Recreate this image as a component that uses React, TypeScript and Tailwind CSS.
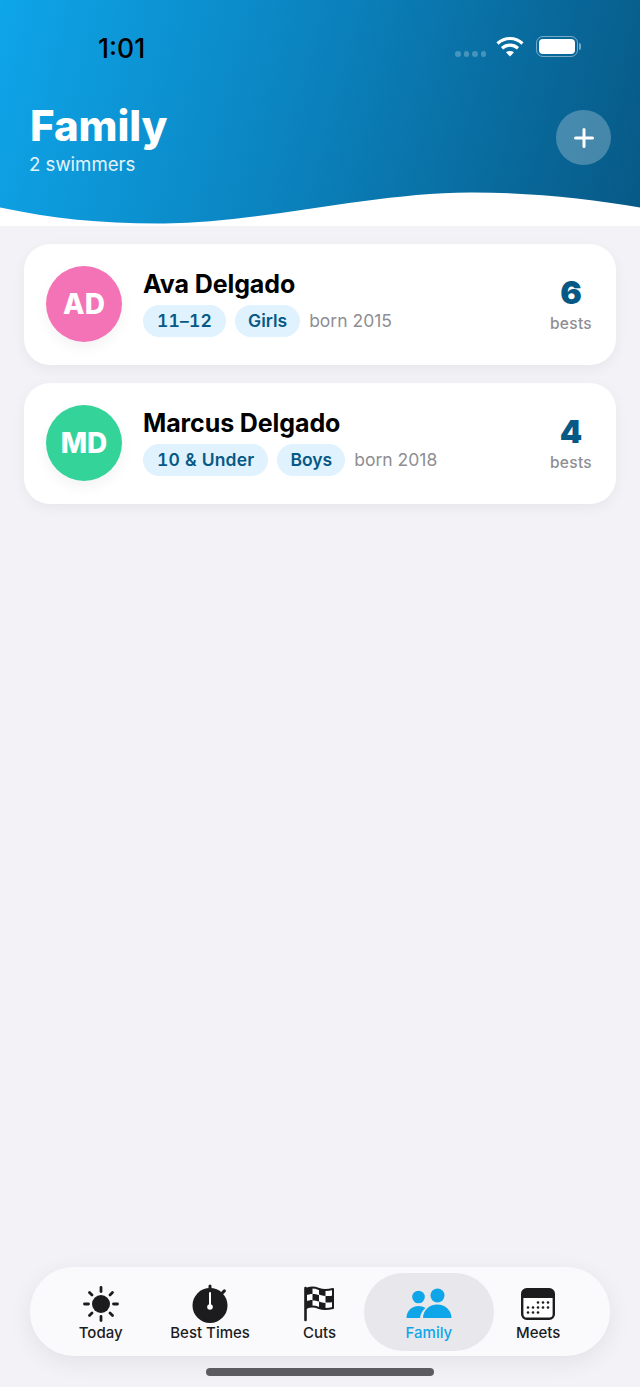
import React from "react";

const SunIcon = () => (
  <svg width="38" height="38" viewBox="0 0 38 38" fill="none">
    <circle cx="19" cy="19" r="9" fill="#1c1c1e" />
    <g stroke="#1c1c1e" strokeWidth="2.8" strokeLinecap="round">
      <path d="M19 2.500v4" />
      <path d="M19 31.500v4" />
      <path d="M2.500 19h4" />
      <path d="M31.500 19h4" />
      <path d="M7.500 7.500l2.500 2.500" />
      <path d="M28 28l2.500 2.500" />
      <path d="M7.500 30.500L10 28" />
      <path d="M28 10l2.500-2.500" />
    </g>
  </svg>
);

const StopwatchIcon = () => (
  <svg width="38" height="40" viewBox="0 0 38 40" fill="none">
    <circle cx="19" cy="21.500" r="17.500" fill="#1c1c1e" />
    <rect x="17.500" y="0.500" width="3" height="5" rx="1.500" fill="#1c1c1e" />
    <rect x="31" y="5" width="3" height="5.500" rx="1.500" transform="rotate(45 32.500 7.750)" fill="#1c1c1e" />
    <rect x="18" y="8" width="2" height="14" rx="1" fill="#fff" />
    <circle cx="19" cy="23" r="2.800" fill="#fff" />
  </svg>
);

const FlagIcon = () => (
  <svg width="32" height="36" viewBox="0 0 32 36" fill="none">
    <path d="M2.500 2v32" stroke="#1c1c1e" strokeWidth="2.600" strokeLinecap="round" />
    <path d="M3 3c5-2.500 9-1.500 13 0s8 1.500 14 0v19c-6 1.500-10 1.500-14 0s-8-2.500-13 0z" fill="#fff" stroke="#1c1c1e" strokeWidth="2" strokeLinejoin="round" />
    <g fill="#1c1c1e">
      <path d="M3 3c2-1 4-1.500 6.500-1.500V8C7 8 5 8.500 3 9.500z" />
      <path d="M16 2.500c2 .7 4 1.200 6.500 1.400V10c-2.500-.2-4.500-.7-6.500-1.400z" />
      <path d="M9.500 8c2.500 0 4.500.4 6.500 1.100v6.500c-2-.7-4-1.100-6.500-1.100z" />
      <path d="M22.500 10c2.500.2 4.500.1 7.500-.4v6.500c-3 .5-5 .6-7.500.4z" />
      <path d="M3 15.500c2-1 4-1.500 6.500-1.500v7c-2.500 0-4.500.5-6.500 1.500z" />
      <path d="M16 15.600c2 .7 4 1.200 6.500 1.400v6.500c-2.500-.2-4.500-.6-6.500-1.300z" />
    </g>
  </svg>
);

const PeopleIcon = () => (
  <svg width="46" height="32" viewBox="0 0 46 32" fill="#0ea5e9">
    <circle cx="12.500" cy="9" r="6.300" />
    <circle cx="31.500" cy="7.500" r="7" />
    <path d="M.5 30c0-7 5-12 12-12 2.800 0 5 .7 7 2-3 2.300-5 5.700-5.500 10z" />
    <path d="M17 30c0-7.500 6-13.500 14.200-13.500S45.500 22.500 45.500 30z" />
  </svg>
);

const CalendarIcon = () => (
  <svg width="34" height="32" viewBox="0 0 34 32" fill="none">
    <rect x="1.200" y="1.200" width="31.600" height="29.600" rx="4.500" fill="#fff" stroke="#1c1c1e" strokeWidth="2.400" />
    <path d="M1.200 6a4.500 4.500 0 0 1 4.500-4.500h22.600A4.500 4.500 0 0 1 32.800 6v4H1.200z" fill="#1c1c1e" />
    <g fill="#1c1c1e">
      {[14.5, 19.5, 24.5].map((y, row) =>
        [7, 12, 17, 22, 27].map((x, col) =>
          (row === 0 && col < 2) || (row === 2 && col > 2) ? null : (
            <circle key={`${x}-${y}`} cx={x} cy={y} r="1.300" />
          )
        )
      )}
    </g>
  </svg>
);

const tabs = [
  { label: "Today", icon: <SunIcon /> },
  { label: "Best Times", icon: <StopwatchIcon /> },
  { label: "Cuts", icon: <FlagIcon /> },
  { label: "Family", icon: <PeopleIcon />, active: true },
  { label: "Meets", icon: <CalendarIcon /> },
];

const swimmers = [
  { initials: "AD", name: "Ava Delgado", age: "11–12", group: "Girls", born: "born 2015", bests: 6, color: "bg-[#f472b6]", shadow: "shadow-[0_6px_14px_rgba(0,0,0,0.05)]" },
  { initials: "MD", name: "Marcus Delgado", age: "10 & Under", group: "Boys", born: "born 2018", bests: 4, color: "bg-[#34d399]", shadow: "shadow-[0_6px_14px_rgba(0,0,0,0.05)]" },
];

const App = () => {
  return (
    <div className="relative flex flex-col h-[1387px] w-[640px] overflow-hidden bg-[#f2f2f7] font-['Inter',sans-serif]">
      {/* Header with wave */}
      <header className="relative h-[226px] shrink-0 bg-[linear-gradient(105deg,#0ea5e9_0%,#0b84c0_45%,#075985_100%)]">
        <div className="flex items-start justify-between h-[94px] pl-[98px] pr-[59px] pt-[33px]">
          <span className="text-[26.5px] leading-[30px] font-medium text-black">1:01</span>
          <div className="flex items-center pt-[3px]">
            <div className="flex items-center gap-[3px] mt-[15px]">
              <span className="h-[5.5px] w-[5.5px] rounded-full bg-white/25" />
              <span className="h-[5.5px] w-[5.5px] rounded-full bg-white/25" />
              <span className="h-[5.5px] w-[5.5px] rounded-full bg-white/25" />
              <span className="h-[5.5px] w-[5.5px] rounded-full bg-white/25" />
            </div>
            <svg className="ml-[10px]" width="28" height="21" viewBox="0 0 28 21" fill="none" stroke="#fff" strokeWidth="3.200">
              <path d="M1.500 7.500C9 .8 19 .8 26.500 7.500" />
              <path d="M6 12.200c4.700-4 11.300-4 16 0" />
              <path d="M14 20.500l-4-4.300c2.300-1.700 5.700-1.700 8 0z" fill="#fff" stroke="none" />
            </svg>
            <div className="flex items-center ml-[12px]">
              <div className="flex h-[21px] w-[42px] items-center justify-center rounded-[7px] border-[1.500px] border-white/45">
                <div className="h-[15px] w-[36px] rounded-[4px] bg-white" />
              </div>
              <div className="ml-[1px] h-[7px] w-[2px] rounded-r-full bg-white/45" />
            </div>
          </div>
        </div>
        <div className="flex items-start justify-between pl-[30px] pr-[29px] pt-[9px]">
          <div>
            <h1 className="text-[42px] leading-[46px] font-extrabold tracking-[-0.1px] text-white">Family</h1>
            <p className="-ml-[1px] mt-[4px] text-[18.6px] leading-[22px] font-normal text-white/90">2 swimmers</p>
          </div>
          <button className="mt-[7px] flex h-[55px] w-[55px] items-center justify-center rounded-full bg-white/25">
            <svg width="22" height="22" viewBox="0 0 22 22" fill="none" stroke="#fff" strokeWidth="3" strokeLinecap="round">
              <path d="M11 2.500v17" />
              <path d="M2.500 11h17" />
            </svg>
          </button>
        </div>
        <svg className="absolute bottom-0 left-0" width="640" height="34" viewBox="0 0 640 34" fill="#fff">
          <path d="M0 15.500C55 27 105 32 165 31.500C265 30 370 1 470 .5C530 .3 590 7 640 15.500V34H0z" />
        </svg>
      </header>

      {/* Swimmer cards */}
      <main className="flex flex-col gap-[18px] px-[24px] pt-[18px]">
        {swimmers.map((s) => (
          <div key={s.initials} className="flex h-[121px] items-center rounded-[26px] bg-white pb-[2px] pl-[22px] pr-[23px] shadow-[0_4px_14px_rgba(0,0,0,0.05)]">
            <div className={`flex h-[76px] w-[76px] shrink-0 items-center justify-center rounded-full text-[28px] font-extrabold text-white ${s.color} ${s.shadow}`}>
              {s.initials}
            </div>
            <div className="ml-[21px] flex-1">
              <div className="text-[25px] leading-[29px] font-bold tracking-[-0.1px] text-black">{s.name}</div>
              <div className="mt-[6px] flex items-center">
                <span className="flex h-[32px] items-center rounded-full bg-[#e0f2fe] px-[14px] text-[17.5px] font-semibold tabular-nums tracking-[0.2px] text-[#075985]">{s.age}</span>
                <span className="ml-[9px] flex h-[32px] items-center rounded-full bg-[#e0f2fe] px-[13px] text-[17.5px] font-semibold text-[#075985]">{s.group}</span>
                <span className="ml-[9px] text-[17.5px] text-[#8e8e93]">{s.born}</span>
              </div>
            </div>
            <div className="flex w-[44px] flex-col items-center">
              <span className="text-[32px] leading-[36px] font-black text-[#075985]">{s.bests}</span>
              <span className="mt-[4px] text-[15.5px] leading-[18px] font-medium tracking-[0.3px] text-[#8e8e93]">bests</span>
            </div>
          </div>
        ))}
      </main>

      {/* Tab bar */}
      <div className="mt-auto mb-[31px] flex justify-center">
        <nav className="flex h-[89px] w-[580px] items-center rounded-[44px] bg-[#fafafc] pl-[16px] shadow-[0_6px_24px_rgba(0,0,0,0.07)]">
          {tabs.map((t) => (
            <div
              key={t.label}
              className={`flex h-[78px] flex-col items-center justify-end pb-[9px] rounded-[39px] ${t.active ? "-mx-[10px] w-[129.4px] bg-[#e8e8ec]" : "w-[109.4px]"}`}
            >
              <div className="flex h-[40px] items-center justify-center">{t.icon}</div>
              <span className={`text-[15px] leading-[18px] font-medium whitespace-nowrap ${t.active ? "text-[#0ea5e9]" : "text-[#1c1c1e]"}`}>{t.label}</span>
            </div>
          ))}
        </nav>
      </div>

      {/* Home indicator */}
      <div className="absolute bottom-[11px] left-[206px] h-[8px] w-[228px] rounded-full bg-[#5c5c60]" />
    </div>
  );
};

export default App;
